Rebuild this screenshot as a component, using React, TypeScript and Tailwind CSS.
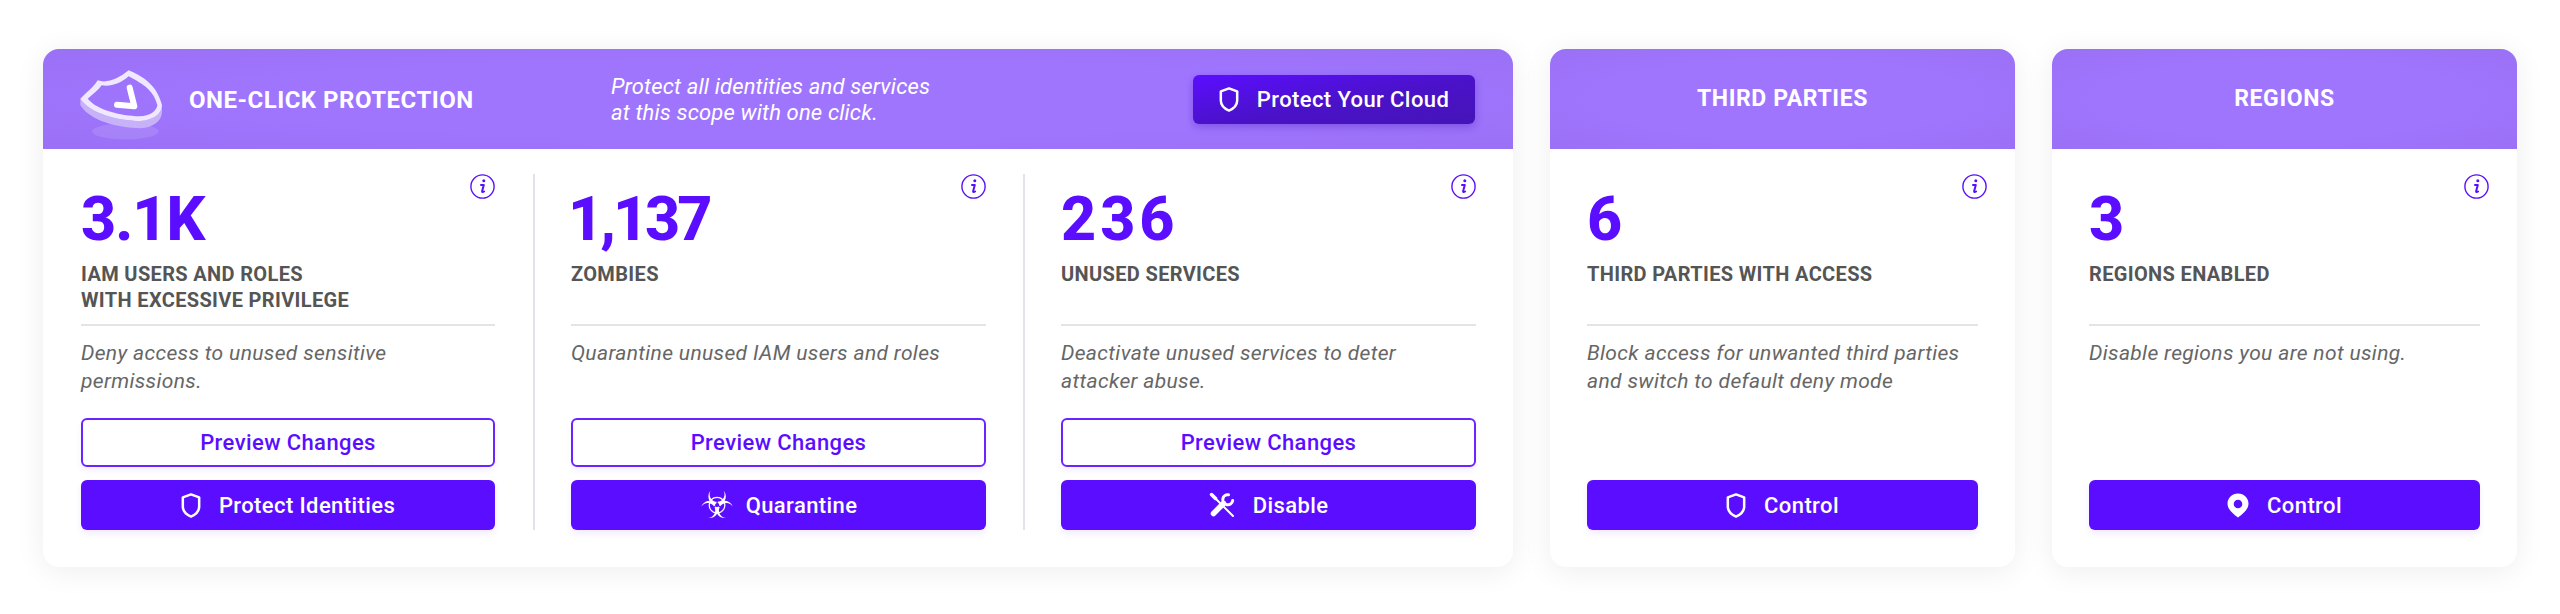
import type { ReactNode } from "react";
import { GiBiohazard } from "react-icons/gi";

const shieldIcon = (
  <svg viewBox="0 0 20 26" className="h-[25px] w-[20px]" fill="none">
    <path
      d="M10 1.5 18.500 4.500V14c0 4.600-3.400 8.300-8.500 10.500C4.900 22.300 1.500 18.600 1.500 14V4.500Z"
      stroke="white"
      strokeWidth="2.600"
      strokeLinejoin="round"
    />
  </svg>
);

const pinIcon = (
  <svg viewBox="0 0 22 25" className="h-[25px] w-[22px]">
    <path
      fillRule="evenodd"
      fill="white"
      d="M11 .5C5 .5.500 5 .500 10.700c0 5 4.500 9.500 10.500 13.800 6-4.300 10.500-8.800 10.500-13.800C21.500 5 17 .5 11 .5Zm0 6.200a4.300 4.300 0 1 1 0 8.600 4.300 4.300 0 0 1 0-8.600Z"
    />
  </svg>
);

const toolsIcon = (
  <svg viewBox="0 0 26 26" className="h-[26px] w-[26px]" fill="none" stroke="white" strokeLinecap="round">
    <path d="M3 3 24 24" strokeWidth="2" />
    <path d="M2.500 2.500 6.500 6.500" strokeWidth="3.500" />
    <path d="M4.500 21.500 14.500 11.500" strokeWidth="5.500" />
    <path d="M19.500 2.800A5 5 0 1 0 23.700 8.500" strokeWidth="3" />
  </svg>
);

function InfoIcon({ className }: { className: string }) {
  return (
    <svg viewBox="0 0 25 25" className={`absolute top-0 h-[25px] w-[25px] ${className}`} fill="none">
      <circle cx="12.500" cy="12.500" r="11.600" stroke="#5b0eff" strokeWidth="1.400" />
      <circle cx="13.800" cy="6.800" r="1.500" fill="#5b0eff" />
      <path
        d="M11 11h2.800l-1.700 6.200c-.2.900.5 1.200 2 .3"
        stroke="#5b0eff"
        strokeWidth="2"
        strokeLinecap="round"
        strokeLinejoin="round"
      />
    </svg>
  );
}

function ShieldLogo() {
  const top =
    "M60 145C80 125 100 110 112 90 140 100 175 85 205 60 240 75 290 100 305 165 305 190 280 210 240 212 170 210 90 190 60 145Z";
  const hole =
    "M82 145C98 131 114 120 124 105 150 110 180 100 205 78 235 95 280 115 291 165 289 182 268 198 238 198 178 195 112 180 82 145Z";
  return (
    <svg viewBox="50 50 270 225" className="mt-[10px] h-[75px] w-[90px] shrink-0">
      <ellipse cx="195" cy="243" rx="100" ry="24" fill="#b79af9" opacity="0.4" />
      <path d="M60 145V165C90 212 170 232 240 234 280 232 305 210 305 185V165C305 190 280 210 240 212 170 210 90 190 60 145Z" fill="#c7b1f9" />
      <path fillRule="evenodd" d={`${top}${hole}`} fill="#efe8ff" />
      <path d="M208 112 222 168 170 163" fill="none" stroke="white" strokeWidth="18" strokeLinecap="round" strokeLinejoin="round" />
    </svg>
  );
}

function FilledButton({ icon, label }: { icon: ReactNode; label: string }) {
  return (
    <button className="flex h-[50px] w-full items-center justify-center gap-[18px] rounded-[6px] bg-[#5b0eff] text-[22px] font-medium tracking-[0.4px] text-white shadow-[0_4px_6px_rgba(91,14,255,0.08)]">
      {icon}
      {label}
    </button>
  );
}

type MetricProps = {
  value: string;
  valueTracking?: string;
  label: string[];
  text: string[];
  preview?: boolean;
  icon: ReactNode;
  action: string;
  width: string;
  infoOffset?: string;
};

function Metric({ value, valueTracking = "", label, text, preview, icon, action, width, infoOffset = "right-0" }: MetricProps) {
  return (
    <div className={`relative flex flex-col ${width}`}>
      <InfoIcon className={infoOffset} />
      <div className={`mt-[9px] h-[72px] text-[61px] font-extrabold leading-[72px] text-[#5b0eff] ${valueTracking}`}>{value}</div>
      <div className="mt-[7px] h-[62px] text-[20px] font-bold leading-[25.500px] tracking-[0.35px] text-[#555555]">
        {label.map((l) => (
          <div key={l}>{l}</div>
        ))}
      </div>
      <div className="h-[2px] bg-[#e4e4e4]" />
      <div className="mt-[13px] h-[79px] text-[21px] italic leading-[28px] tracking-[0.35px] text-[#666666]">
        {text.map((t) => (
          <div key={t}>{t}</div>
        ))}
      </div>
      {preview ? (
        <button className="mb-[13px] h-[49px] w-full rounded-[6px] border-2 border-[#6a24ff] bg-white text-[22px] font-medium tracking-[0.4px] text-[#5b0eff] shadow-[0_4px_6px_rgba(91,14,255,0.06)]">
          Preview Changes
        </button>
      ) : (
        <div className="h-[62px]" />
      )}
      <FilledButton icon={icon} label={action} />
    </div>
  );
}

const headerBg = "bg-[radial-gradient(ellipse_at_center,#a075fe_55%,#9a70f5_100%)]";

function SmallCard({ title, children }: { title: string; children: ReactNode }) {
  return (
    <section className="h-[518px] w-[465px] overflow-hidden rounded-[16px] bg-white shadow-[0_4px_30px_rgba(0,0,0,0.07)]">
      <header className={`flex h-[100px] items-center justify-center text-[23px] font-bold tracking-[0.6px] text-white ${headerBg}`}>
        {title}
      </header>
      <div className="px-[37px] pb-[37px] pt-[25px]">{children}</div>
    </section>
  );
}

export default function App() {
  return (
    <div className="flex h-[614px] items-start gap-[37px] bg-white pl-[43px] pt-[49px] font-['Roboto',sans-serif]">
      <section className="h-[518px] w-[1470px] overflow-hidden rounded-[16px] bg-white shadow-[0_4px_30px_rgba(0,0,0,0.07)]">
        <header className={`flex h-[100px] items-center pl-[34px] text-white ${headerBg}`}>
          <ShieldLogo />
          <h2 className="ml-[22px] mt-[2px] w-[422px] text-[24px] font-bold tracking-[0.5px]">ONE-CLICK PROTECTION</h2>
          <p className="mt-[2px] w-[582px] text-[22px] italic leading-[26px] tracking-[0.15px]">
            Protect all identities and services
            <br />
            at this scope with one click.
          </p>
          <button className="flex h-[49px] w-[282px] items-center justify-center gap-[18px] rounded-[6px] bg-[linear-gradient(170deg,#5b0eff_0%,#4a12c8_55%,#4514b8_100%)] text-[22px] font-medium tracking-[0.4px] text-white shadow-[0_3px_8px_rgba(60,10,180,0.3)]">
            {shieldIcon}
            Protect Your Cloud
          </button>
        </header>
        <div className="flex pb-[37px] pl-[38px] pt-[25px]">
          <Metric
            width="w-[414px]"
            value="3.1K"
            valueTracking="tracking-[-1px]"
            label={["IAM USERS AND ROLES", "WITH EXCESSIVE PRIVILEGE"]}
            text={["Deny access to unused sensitive", "permissions."]}
            preview
            icon={shieldIcon}
            action="Protect Identities"
          />
          <div className="ml-[38px] mr-[36px] w-[2px] bg-[#e2e2e8]" />
          <Metric
            width="w-[415px]"
            value="1,137"
            valueTracking="-ml-[3px] tracking-[-3px]"
            label={["ZOMBIES"]}
            text={["Quarantine unused IAM users and roles"]}
            preview
            icon={<GiBiohazard className="-mr-[6px] h-[34px] w-[34px]" />}
            action="Quarantine"
          />
          <div className="ml-[37px] mr-[36px] w-[2px] bg-[#e2e2e8]" />
          <Metric
            width="w-[415px]"
            value="236"
            valueTracking="tracking-[4px]"
            label={["UNUSED SERVICES"]}
            text={["Deactivate unused services to deter", "attacker abuse."]}
            preview
            icon={toolsIcon}
            action="Disable"
          />
        </div>
      </section>
      <SmallCard title="THIRD PARTIES">
        <Metric
          width="w-full"
          infoOffset="right-[-9px]"
          value="6"
          label={["THIRD PARTIES WITH ACCESS"]}
          text={["Block access for unwanted third parties", "and switch to default deny mode"]}
          icon={shieldIcon}
          action="Control"
        />
      </SmallCard>
      <SmallCard title="REGIONS">
        <Metric
          width="w-full"
          infoOffset="right-[-9px]"
          value="3"
          label={["REGIONS ENABLED"]}
          text={["Disable regions you are not using."]}
          icon={pinIcon}
          action="Control"
        />
      </SmallCard>
    </div>
  );
}
